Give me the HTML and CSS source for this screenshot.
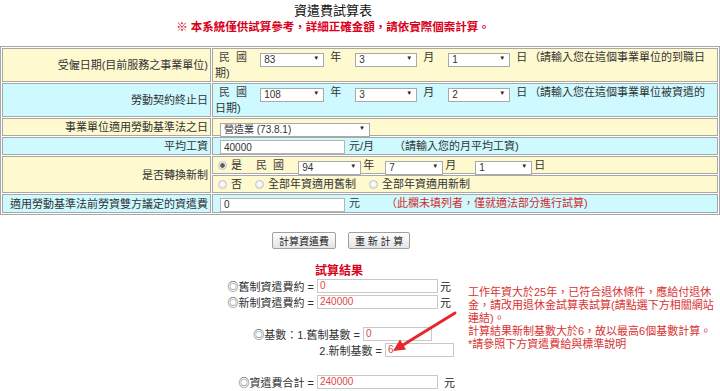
FILE: index.html
```html
<!DOCTYPE html>
<html lang="zh-Hant">

<head>
  <meta charset="UTF-8" />
  <title>資遣費試算表</title>
  <link rel="stylesheet" href="styles.css">
</head>

<body>
  <div class="head">
    <h1>資遣費試算表</h1>
    <p>※ 本系統僅供試算參考，詳細正確金額，請依實際個案計算。</p>
  </div>

  <table class="calc">
    <tr class="y">
      <td class="lbl">受僱日期(目前服務之事業單位)</td>
      <td>
        <span class="roc">民&nbsp;&nbsp;國</span><span class="dd w64"><select><option>83</option></select></span><span class="u">年</span><span class="dd w62"><select><option>3</option></select></span><span class="u">月</span><span class="dd w62"><select><option>1</option></select></span><span class="u last">日</span>（請輸入您在這個事業單位的到職日<br>期)
      </td>
    </tr>
    <tr class="c">
      <td class="lbl">勞動契約終止日</td>
      <td>
        <span class="roc">民&nbsp;&nbsp;國</span><span class="dd w64"><select><option>108</option></select></span><span class="u">年</span><span class="dd w62"><select><option>3</option></select></span><span class="u">月</span><span class="dd w62"><select><option>2</option></select></span><span class="u last">日</span>（請輸入您在這個事業單位被資遣的<br>日期)
      </td>
    </tr>
    <tr class="y">
      <td class="lbl">事業單位適用勞動基準法之日</td>
      <td><span class="dd w150 ml5"><select><option>營造業 (73.8.1)</option></select></span></td>
    </tr>
    <tr class="c">
      <td class="lbl">平均工資</td>
      <td><input class="txt ml5" type="text" value="40000"><span class="unit">元/月</span><span class="hint">（請輸入您的月平均工資)</span></td>
    </tr>
    <tr class="y">
      <td class="lbl" rowspan="2">是否轉換新制</td>
      <td>
        <label class="opt"><input type="radio" name="conv" checked>是</label><span class="roc wide">民&nbsp;&nbsp;國</span><span class="dd w63"><select><option>94</option></select></span><span class="u2">年</span><span class="dd w58"><select><option>7</option></select></span><span class="u2 wide">月</span><span class="dd w57"><select><option>1</option></select></span><span class="u2">日</span>
      </td>
    </tr>
    <tr class="y">
      <td>
        <label class="opt"><input type="radio" name="conv">否</label><label class="opt"><input type="radio" name="conv">全部年資適用舊制</label><label class="opt"><input type="radio" name="conv">全部年資適用新制</label>
      </td>
    </tr>
    <tr class="c">
      <td class="lbl">適用勞動基準法前勞資雙方議定的資遣費</td>
      <td><input class="txt ml5" type="text" value="0"><span class="unit">元</span><span class="warn">（此欄未填列者，僅就適法部分進行試算)</span></td>
    </tr>
  </table>

  <div class="btns">
    <button type="button">計算資遣費</button>
    <button type="button">重 新 計 算</button>
  </div>

  <div class="result">
    <div class="rows">
      <div class="r t">試算結果</div>
      <div class="r"><span class="k">◎舊制資遣費約 =&nbsp;</span><input class="out w120" type="text" value="0"><span class="yuan">元</span></div>
      <div class="r"><span class="k">◎新制資遣費約 =&nbsp;</span><input class="out w120" type="text" value="240000"><span class="yuan">元</span></div>
      <div class="r"></div>
      <div class="r"><span class="k b1">◎基數：1.舊制基數 =&nbsp;</span><input class="out w69" type="text" value="0"></div>
      <div class="r"><span class="k b2">2.新制基數 =&nbsp;</span><input class="out w69" type="text" value="6"></div>
      <div class="r"></div>
      <div class="r"><span class="k">◎資遣費合計 =&nbsp;</span><input class="out w120" type="text" value="240000"><span class="yuan far">元</span></div>
    </div>
    <div class="note">工作年資大於25年，已符合退休條件，應給付退休<br>金，請改用退休金試算表試算(請點選下方相關網站<br>連結)。<br>計算結果新制基數大於6，故以最高6個基數計算。<br>*請參照下方資遣費給與標準說明</div>

    <svg class="arrow" width="90" height="60" viewBox="0 0 90 60">
      <line x1="75" y1="13" x2="23" y2="45" stroke="#e8262b" stroke-width="3" stroke-linecap="round" />
      <polygon points="13,51 26,49.5 20,39.5" fill="#e8262b" />
    </svg>
  </div>
</body>

</html>
```

FILE: styles.css
```css
/* 資遣費試算表 */
* {
  box-sizing: border-box;
}

body {
  margin: 0;
  font-family: "Liberation Sans", "Noto Sans CJK TC", sans-serif;
  font-size: 11px;
  color: #222;
  background: #fff;
}

.head {
  padding-right: 54px;
  text-align: center;
}

.head h1 {
  margin: 3px 0 0;
  font-size: 13px;
  line-height: 16px;
  font-weight: normal;
  color: #111;
}

.head p {
  margin: 0;
  font-size: 11.5px;
  line-height: 16px;
  font-weight: bold;
  color: #d9001b;
}

table.calc {
  width: 100%;
  margin-top: 11px;
  border: 1px solid #a8a8a8;
  border-spacing: 1px;
}

table.calc td {
  border: 1px solid #a8a8a8;
  padding: 0 2px;
  line-height: 16px;
  white-space: nowrap;
  color: #333;
}

td.lbl {
  width: 209px;
  text-align: right;
  padding-right: 1px;
}

tr.y td {
  background: #fff9cf;
}

tr.c td {
  background: #cdf9ff;
}

.roc {
  margin: 0 13px 0 4px;
  color: #444;
}

.roc.wide {
  margin: 0 14px 0 1px;
}

.u {
  margin: 0 14px 0 6px;
}

.u.last {
  margin-right: 2px;
}

.u2 {
  margin: 0 11px 0 2px;
}

.u2.wide {
  margin-right: 19px;
}

.ml5 {
  margin-left: 5px;
}

/* 下拉選單 */
.dd {
  position: relative;
  display: inline-block;
  vertical-align: middle;
  height: 14px;
}

.dd select {
  -webkit-appearance: none;
  appearance: none;
  width: 100%;
  height: 14px;
  border: 1px solid #a9a9a9;
  border-radius: 0;
  background: #fff;
  padding: 0 3px;
  font: 10px "Liberation Sans", "Noto Sans CJK TC", sans-serif;
  color: #333;
}

.dd::after {
  content: "▼";
  position: absolute;
  right: 5px;
  top: 3px;
  font-size: 6px;
  line-height: 8px;
  color: #222;
  pointer-events: none;
}

.w64 { width: 64px; }
.w62 { width: 62px; }
.w63 { width: 63px; }
.w58 { width: 58px; }
.w57 { width: 57px; }
.w150 { width: 150px; }

.txt {
  width: 125px;
  height: 14px;
  vertical-align: middle;
  border: 1px solid #b5b5b5;
  padding: 0 3px;
  font: 10px "Liberation Sans", sans-serif;
  color: #333;
  background: #fff;
}

.unit {
  margin-left: 4px;
}

.hint {
  margin-left: 20px;
}

.warn {
  margin-left: 26px;
  color: #d42a2a;
}

/* 單選 */
.opt {
  margin-right: 13px;
}

.opt:first-child {
  margin-left: 3px;
}

.opt input {
  -webkit-appearance: none;
  appearance: none;
  width: 9px;
  height: 9px;
  margin: 0 4px 0 0;
  vertical-align: -1px;
  border: 1px solid #c4c4c4;
  border-radius: 50%;
  background: radial-gradient(circle at 50% 40%, #fff 0, #e2e2e2 100%);
}

.opt input:checked {
  background: radial-gradient(circle, #555 0, #666 2px, #eee 2.6px, #ddd 100%);
}

.btns {
  display: flex;
  gap: 12px;
  padding-left: 272px;
  margin-top: 17px;
}

.btns button {
  height: 17px;
  padding: 0 6px;
  border: 1px solid #a0a0a0;
  border-radius: 2px;
  background: linear-gradient(#fdfdfd, #e4e4e4);
  font: 10px "Liberation Sans", "Noto Sans CJK TC", sans-serif;
  color: #222;
}

/* 試算結果 */
.result {
  position: relative;
  display: grid;
  grid-template-columns: 468px auto;
  margin-top: 13px;
}

.r {
  display: flex;
  align-items: center;
  height: 16px;
}

.r.t {
  padding-left: 315px;
  font-weight: bold;
  font-size: 12px;
  color: #d9001b;
}

.k {
  width: 317px;
  text-align: right;
  white-space: nowrap;
  color: #333;
}

.k.b1 {
  width: 363px;
}

.k.b2 {
  width: 385px;
}

.out {
  height: 14px;
  border: 1px solid #c8c8c8;
  padding: 0 2px;
  font: 10px "Liberation Sans", sans-serif;
  color: #e04848;
  background: #fff;
}

.w120 { width: 121px; }
.w69 { width: 69px; }

.yuan {
  margin-left: 2px;
}

.yuan.far {
  margin-left: 6px;
}

.note {
  margin-top: 24px;
  line-height: 13px;
  white-space: nowrap;
  color: #d83232;
}

.arrow {
  position: absolute;
  left: 380px;
  top: 38px;
}
```
